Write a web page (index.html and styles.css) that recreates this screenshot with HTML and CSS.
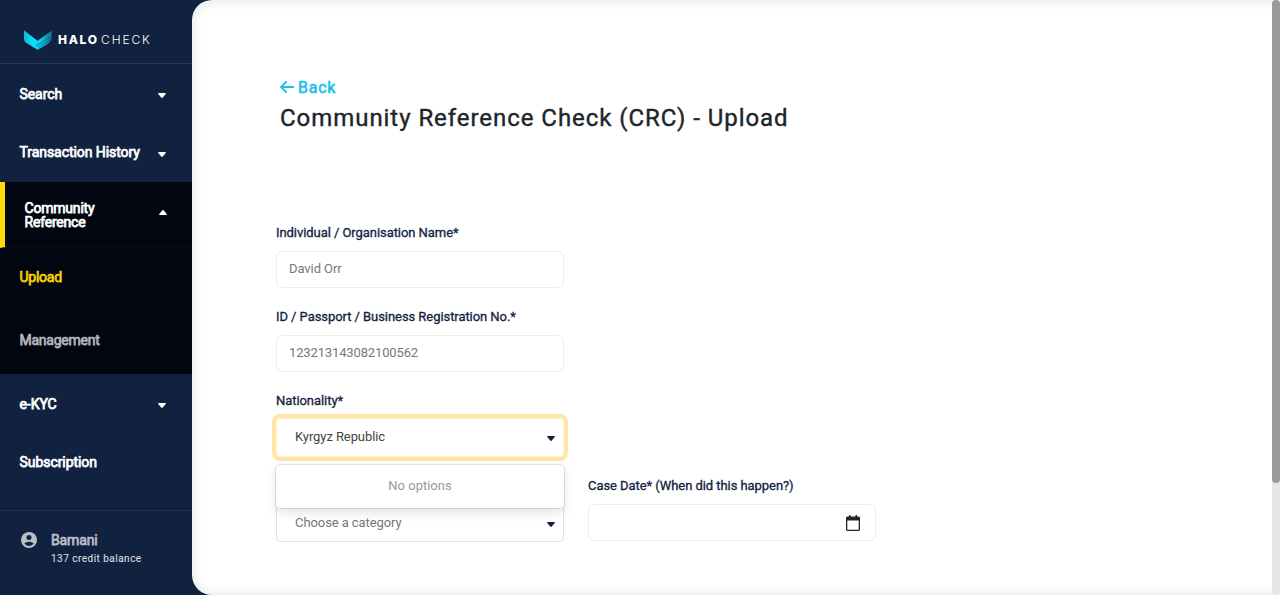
FILE: index.html
```html
<!DOCTYPE html>
<html lang="en">
<head>
<meta charset="utf-8">
<title>HaloCheck - Community Reference Check</title>
<link rel="stylesheet" href="styles.css">
</head>
<body>
<div class="app">
  <aside class="sidebar">
    <div class="brand">
      <svg class="brand-mark" width="28" height="20" viewBox="0 0 28 20">
        <defs>
          <linearGradient id="wing" x1="0" y1="0" x2="1" y2="0">
            <stop offset="0" stop-color="#0fb9d8"/>
            <stop offset=".35" stop-color="#04e4fb"/>
            <stop offset=".6" stop-color="#08cfea"/>
            <stop offset="1" stop-color="#136f94"/>
          </linearGradient>
        </defs>
        <path fill="url(#wing)" d="M0 .3 13.500 10.800 27.700 .8V7Q27.400 11.800 24 13.800L13.700 19.700 2.500 13Q0 11.500 0 9.500Z"/>
        <path stroke="#11506f" stroke-width=".7" fill="none" d="M11.500 16 27.600 6.300M14 17.400 27.500 9.200"/>
      </svg>
      <span class="brand-name"><b>HALO</b><span class="brand-thin">CHECK</span></span>
    </div>
    <nav class="menu">
      <a class="item first"><span>Search</span><svg class="caret" width="8" height="5" viewBox="0 0 8 5"><path d="M.6 0h6.8q.8.3.3 1L4.8 4.6q-.8.6-1.6 0L.3 1Q-.2.3.6 0Z"/></svg></a>
      <a class="item"><span>Transaction History</span><svg class="caret low" width="8" height="5" viewBox="0 0 8 5"><path d="M.6 0h6.8q.8.3.3 1L4.8 4.6q-.8.6-1.6 0L.3 1Q-.2.3.6 0Z"/></svg></a>
      <div class="group">
        <a class="item active"><span>Community<br>Reference</span><svg class="caret up" width="8" height="5" viewBox="0 0 8 5"><path d="M.6 5h6.8q.8-.3.3-1L4.8.4q-.8-.6-1.6 0L.3 4Q-.2 4.7.6 5Z"/></svg></a>
        <a class="item sub current"><span>Upload</span></a>
        <a class="item sub last"><span>Management</span></a>
      </div>
      <a class="item first"><span>e-KYC</span><svg class="caret" width="8" height="5" viewBox="0 0 8 5"><path d="M.6 0h6.8q.8.3.3 1L4.8 4.6q-.8.6-1.6 0L.3 1Q-.2.3.6 0Z"/></svg></a>
      <a class="item"><span>Subscription</span></a>
    </nav>
    <div class="account">
      <svg class="avatar" width="16" height="16" viewBox="0 0 16 16"><circle cx="8" cy="8" r="8"/><circle class="cut" cx="8" cy="5.500" r="2.500"/><path class="cut" d="M3.200 11.500Q5.200 9.700 8 9.700T12.800 11.500Q10.900 13.900 8 13.900T3.200 11.500Z"/></svg>
      <div>
        <div class="user">Bamani</div>
        <div class="credit">137 credit balance</div>
      </div>
    </div>
  </aside>
  <main class="content">
    <a class="back"><svg width="14" height="12" viewBox="0 0 14 12"><path d="M13.4 6H1M6.2.8 1 6l5.2 5.2"/></svg><span>Back</span></a>
    <h1 class="title">Community Reference Check (CRC) - Upload</h1>
    <form class="form">
      <div class="field">
        <label class="label">Individual / Organisation Name*</label>
        <div class="input">David Orr</div>
      </div>
      <div class="field">
        <label class="label">ID / Passport / Business Registration No.*</label>
        <div class="input number">123213143082100562</div>
      </div>
      <div class="field nationality">
        <label class="label">Nationality*</label>
        <div class="select focused"><span>Kyrgyz Republic</span><svg class="caret" width="8" height="5" viewBox="0 0 8 5"><path d="M.6 0h6.8q.8.3.3 1L4.8 4.6q-.8.6-1.6 0L.3 1Q-.2.3.6 0Z"/></svg></div>
        <div class="dropdown">No options</div>
      </div>
      <div class="pair">
        <div class="field">
          <label class="label">Category*</label>
          <div class="select category"><span>Choose a category</span><svg class="caret" width="8" height="5" viewBox="0 0 8 5"><path d="M.6 0h6.8q.8.3.3 1L4.8 4.6q-.8.6-1.6 0L.3 1Q-.2.3.6 0Z"/></svg></div>
        </div>
        <div class="field">
          <label class="label">Case Date* (When did this happen?)</label>
          <div class="input date"><svg width="14" height="16" viewBox="0 0 14 16"><path d="M1.5 1.5H3V0h1.5v1.500h5V0H11v1.500h1.500Q14 1.500 14 3v11.500Q14 16 12.500 16h-11Q0 16 0 14.500V3Q0 1.500 1.500 1.500ZM1.300 5.500v9.200h11.400V5.500Z" fill-rule="evenodd"/></svg></div>
        </div>
      </div>
    </form>
  </main>
  <div class="scrollbar"><div class="thumb"></div></div>
</div>
</body>
</html>
```
FILE: styles.css
```css
* { box-sizing: border-box; }
body {
  margin: 0;
  height: 595px;
  overflow: hidden;
  background: #112240;
  font-family: Roboto, "Liberation Sans", sans-serif;
  font-size: 13px;
}
.app { display: flex; height: 595px; }

.sidebar {
  display: flex;
  flex-direction: column;
  width: 192px;
  color: #fff;
}
.brand {
  display: flex;
  align-items: flex-start;
  height: 64px;
  padding: 30px 0 0 24px;
  border-bottom: 1px solid #1c3766;
}
.brand-mark { margin-right: 6px; }
.brand-name {
  display: flex;
  margin-top: 2px;
  font: 12px/15px Inter, sans-serif;
  letter-spacing: 1.7px;
}
.brand-name b { width: 43px; font-weight: 800; }
.brand-thin { font-weight: 300; letter-spacing: 1.9px; }
.menu { height: 446px; }
.item {
  display: flex;
  align-items: center;
  justify-content: space-between;
  height: 58px;
  padding: 0 26px 0 19.5px;
  font-size: 14px;
  font-weight: 400;
  line-height: 14px;
  letter-spacing: -.06px;
  -webkit-text-stroke: .75px;
}
.item.first { height: 59px; }
.caret { flex: none; fill: #fff; margin-top: 3px; -webkit-text-stroke: 0; }
.caret.low { margin-top: 5px; }
.caret.up { margin: -4px 0 0; }
.group { margin-top: 1px; background: #010610; }
.item.active {
  height: 66px;
  padding: 0 25px 0 19.5px;
  border-left: 5px solid #ffd80a;
  border-bottom: 1px solid #060d18;
  letter-spacing: -.2px;
}
.item.sub { color: #b3b6ba; letter-spacing: -.25px; }
.item.sub.current { color: #f6cf05; }
.item.sub.last { height: 68px; }
.account {
  display: flex;
  flex: 1;
  align-items: flex-start;
  padding: 21px 0 0 21px;
  border-top: 1px solid #193463;
  color: #b9bec7;
}
.avatar { margin-right: 14px; fill: #b9bec7; }
.avatar .cut { fill: #112240; }
.user { font-size: 14px; line-height: 16px; letter-spacing: -.15px; -webkit-text-stroke: .75px; }
.credit {
  margin-top: 5px;
  font-size: 10px;
  line-height: 12px;
  letter-spacing: .48px;
  color: #d2d5da;
  -webkit-text-stroke: .15px;
}

/* Runs under the scrollbar so that its right edge carries no shade. */
.content {
  flex: 1;
  margin-right: -20px;
  padding: 78px 0 0 84px;
  border-radius: 20px 0 0 20px;
  background: #fff;
  box-shadow: inset 0 0 12px rgba(18, 34, 63, .14);
}
.back {
  display: flex;
  align-items: center;
  gap: 4px;
  height: 19px;
  margin-left: 4px;
  color: #1dbfea;
  font-size: 16px;
  letter-spacing: .75px;
  -webkit-text-stroke: .6px;
}
.back svg { margin-top: -1px; fill: none; stroke: #1dbfea; stroke-width: 1.9; stroke-linecap: round; }
.title {
  margin: 5px 0 0 4px;
  color: #212529;
  font-size: 24px;
  font-weight: 400;
  line-height: 32px;
  letter-spacing: .95px;
  -webkit-text-stroke: .4px;
}
.form { margin-top: 90px; }
.field { position: relative; width: 288px; height: 84px; }
.label {
  display: block;
  height: 27px;
  color: #12223f;
  line-height: 18px;
  letter-spacing: -.06px;
  -webkit-text-stroke: .3px;
}
.input, .select {
  display: flex;
  align-items: center;
  height: 37px;
  padding: 0 12px 2px;
  border: 1px solid #ebecec;
  border-radius: 6px;
  background: #fff;
  color: #75797d;
  letter-spacing: -.08px;
}
.number { letter-spacing: -.14px; }
.select {
  justify-content: space-between;
  padding: 0 8px 2px 18px;
  color: #444;
}
.select .caret { fill: #12223f; margin-top: 5px; }
.focused {
  height: 39px;
  margin-top: -1px;
  border-color: #fff3d0;
  border-radius: 4px;
  box-shadow: 0 0 0 4px #ffe6a6;
}
.focused .caret { margin-top: 4px; }
.nationality { height: 85px; z-index: 2; }
.dropdown {
  position: absolute;
  top: 73px;
  left: 0;
  width: 288px;
  height: 43px;
  border-radius: 4px;
  background: #fff;
  box-shadow: 0 0 0 1px rgba(0, 0, 0, .1), 0 4px 11px rgba(0, 0, 0, .12);
  color: #999;
  line-height: 41px;
  text-align: center;
}
.pair { display: flex; gap: 24px; }
.category { height: 38px; border-color: #dee2e6; border-radius: 4px; color: #777; }
.input.date { justify-content: flex-end; padding: 0 15px 0 0; }
.date svg { fill: #212529; }

.scrollbar { position: relative; width: 8px; border-radius: 4px; background: #e6e6e6; }
.thumb { height: 483px; border-radius: 4px; background: #999; }
```
